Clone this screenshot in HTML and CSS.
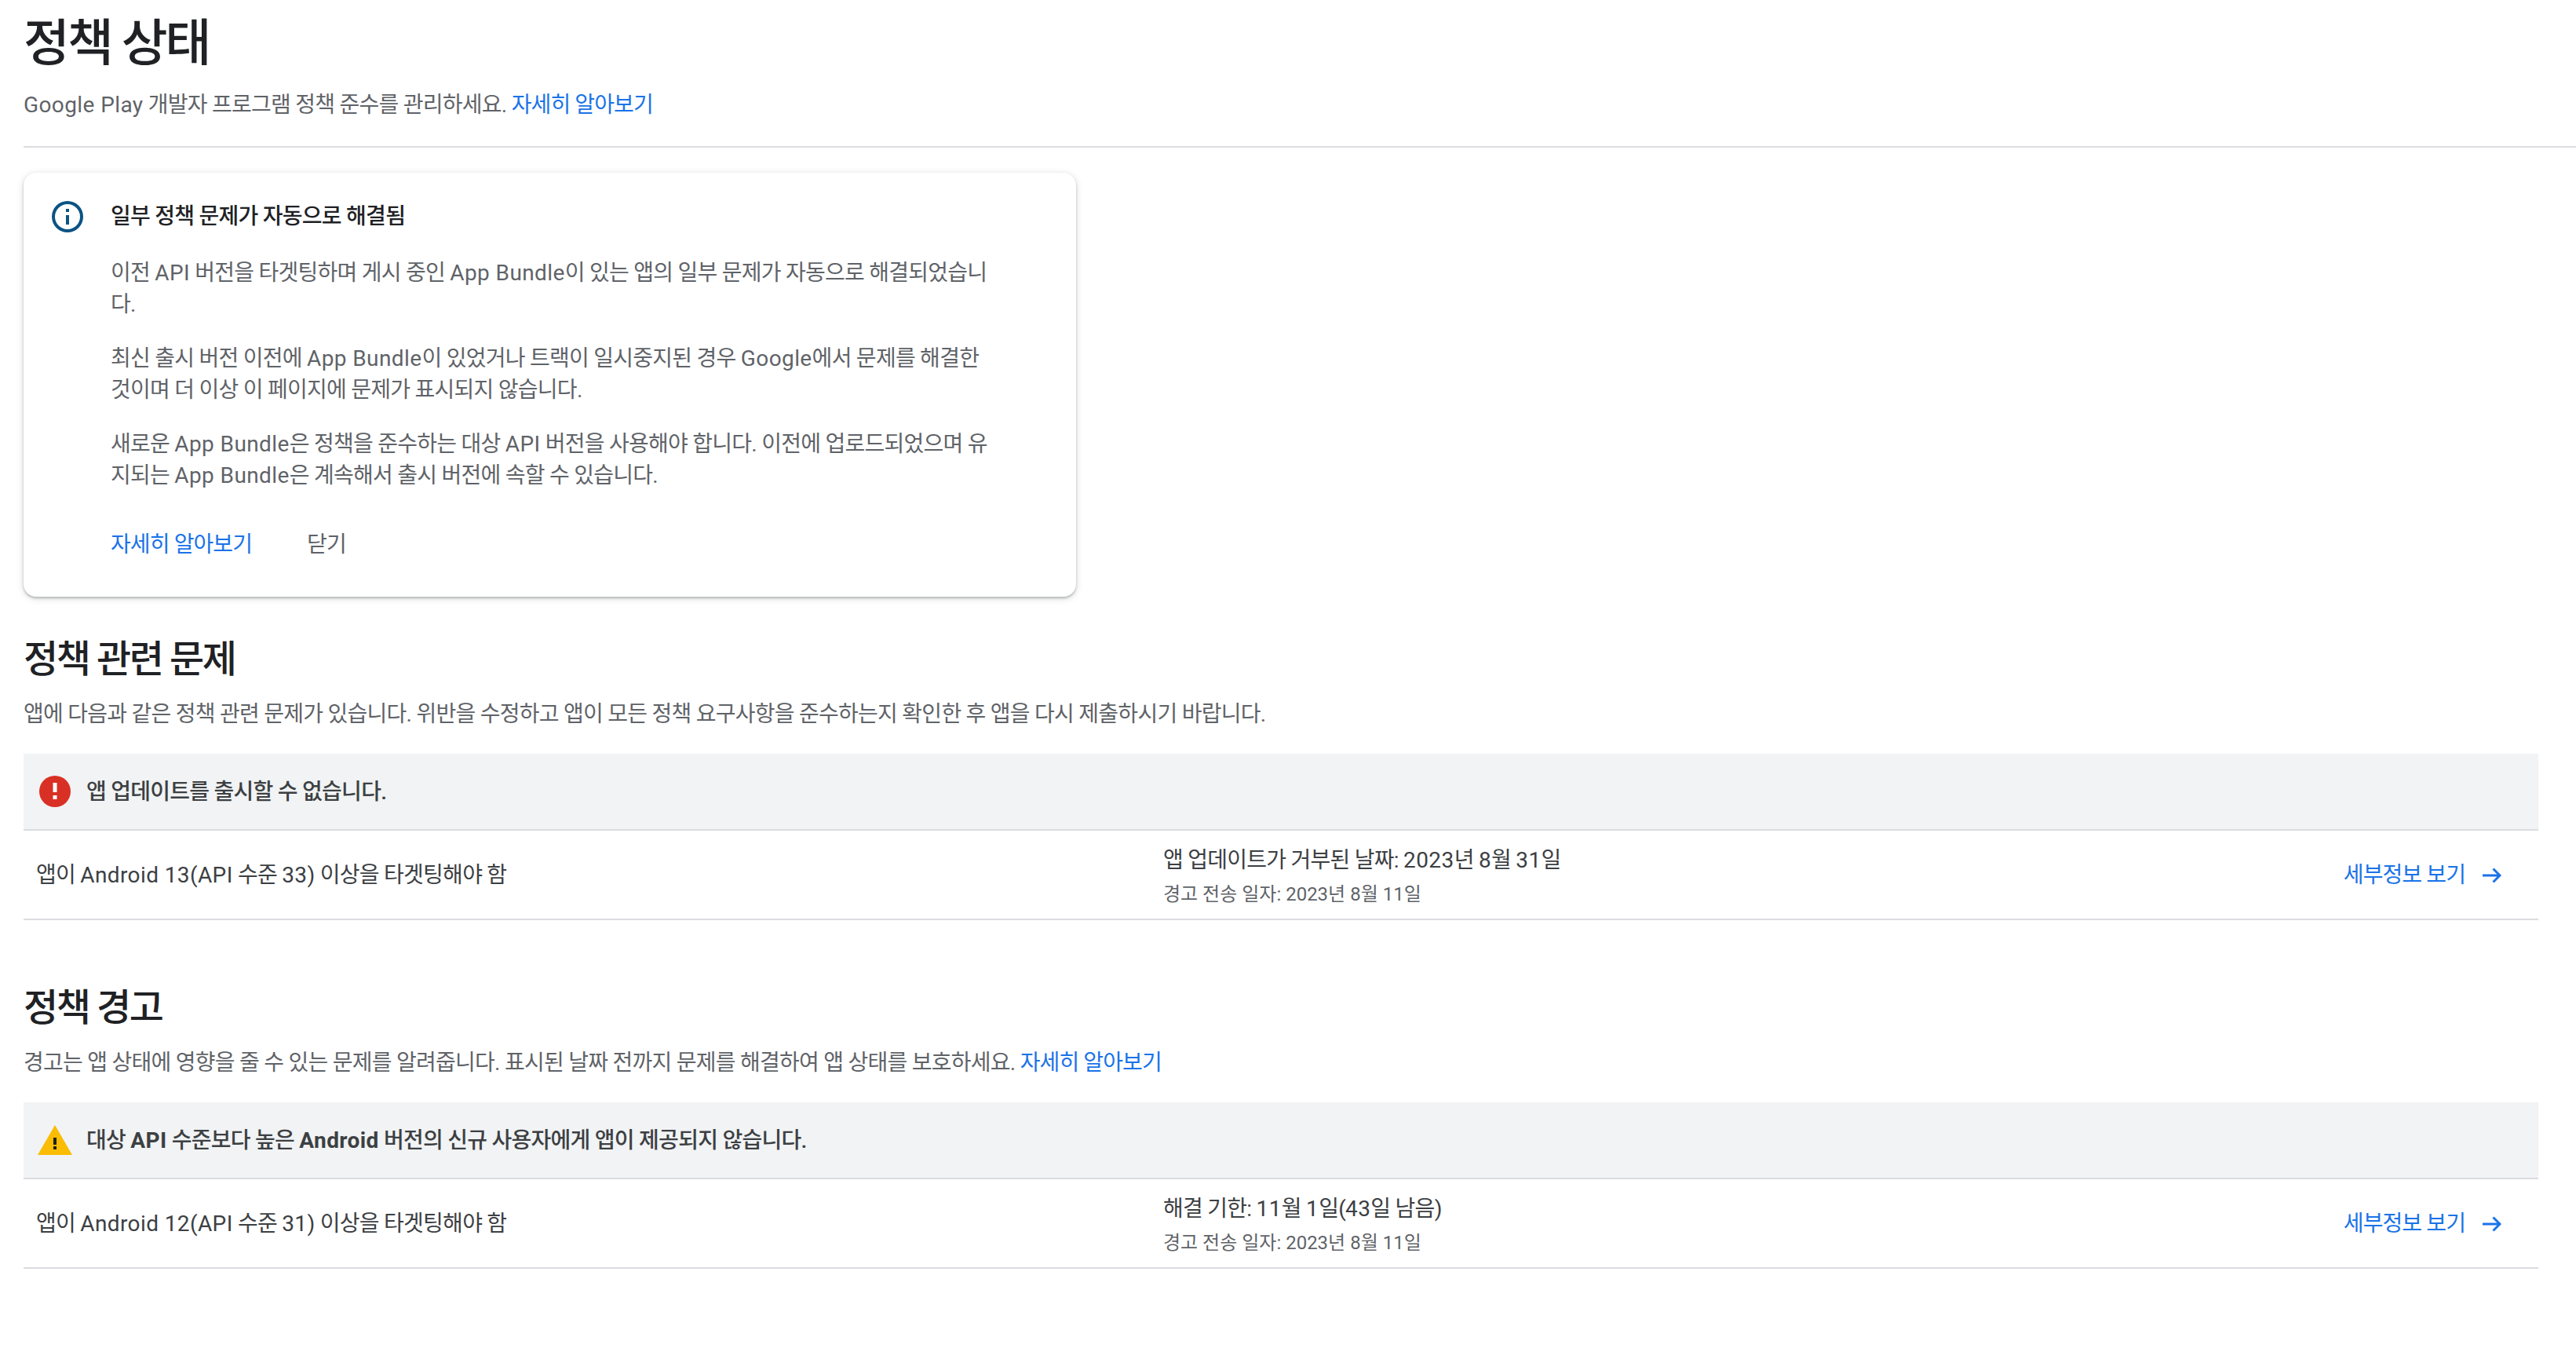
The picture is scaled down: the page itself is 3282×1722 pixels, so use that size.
FILE: index.html
```html
<!DOCTYPE html>
<html lang="ko">
<head>
<meta charset="utf-8">
<title>정책 상태</title>
<link rel="stylesheet" href="styles.css">
</head>
<body>
<main class="page">
  <header class="head">
    <h1 class="title">정책 상태</h1>
    <p class="text sub"><span class="en">Google Play</span> 개발자 프로그램 정책 준수를 관리하세요. <a class="link">자세히 알아보기</a></p>
  </header>

  <section class="card">
    <svg class="info-icon" viewBox="0 0 24 24" width="48" height="48"><path fill="#0b5384" d="M11 7h2v2h-2zm0 4h2v6h-2zm1-9a10 10 0 1 0 0 20 10 10 0 0 0 0-20zm0 18a8 8 0 1 1 0-16 8 8 0 0 1 0 16z"/></svg>
    <div class="card-body">
      <h3 class="card-title">일부 정책 문제가 자동으로 해결됨</h3>
      <p class="card-p">이전 <span class="en">API</span> 버전을 타겟팅하며 게시 중인 <span class="en">App Bundle</span>이 있는 앱의 일부 문제가 자동으로 해결되었습니다.</p>
      <p class="card-p">최신 출시 버전 이전에 <span class="en">App Bundle</span>이 있었거나 트랙이 일시중지된 경우 <span class="en">Google</span>에서 문제를 해결한 것이며 더 이상 이 페이지에 문제가 표시되지 않습니다.</p>
      <p class="card-p">새로운 <span class="en">App Bundle</span>은 정책을 준수하는 대상 <span class="en">API</span> 버전을 사용해야 합니다. 이전에 업로드되었으며 유지되는 <span class="en">App Bundle</span>은 계속해서 출시 버전에 속할 수 있습니다.</p>
      <div class="card-actions"><a class="link">자세히 알아보기</a><span class="text">닫기</span></div>
    </div>
  </section>

  <section class="issues issues-first">
    <h2 class="section-title">정책 관련 문제</h2>
    <p class="text desc">앱에 다음과 같은 정책 관련 문제가 있습니다. 위반을 수정하고 앱이 모든 정책 요구사항을 준수하는지 확인한 후 앱을 다시 제출하시기 바랍니다.</p>
    <div class="banner">
      <svg class="banner-icon" viewBox="0 0 44 40" width="44" height="40"><circle cx="22" cy="20" r="20" fill="#d93025"/><rect x="19.5" y="9" width="5" height="12" fill="#fff"/><rect x="19.5" y="25" width="5" height="5" fill="#fff"/></svg>
      <span class="banner-text">앱 업데이트를 출시할 수 없습니다.</span>
    </div>
    <div class="row">
      <div class="cell-name">앱이 <span class="en">Android 13(API</span> 수준 <span class="en">33)</span> 이상을 타겟팅해야 함</div>
      <div class="cell-date"><div class="date-main">앱 업데이트가 거부된 날짜: <span class="en">2023</span>년 <span class="en">8</span>월 <span class="en">31</span>일</div><div class="date-sub">경고 전송 일자: 2023년 8월 11일</div></div>
      <a class="details"><span>세부정보 보기</span><svg viewBox="0 0 24 24" width="24" height="24"><path fill="none" stroke="#1a73e8" stroke-width="3" d="M0 12H22M13.5 3.5L22 12L13.5 20.5"/></svg></a>
    </div>
  </section>

  <section class="issues">
    <h2 class="section-title">정책 경고</h2>
    <p class="text desc">경고는 앱 상태에 영향을 줄 수 있는 문제를 알려줍니다. 표시된 날짜 전까지 문제를 해결하여 앱 상태를 보호하세요. <a class="link">자세히 알아보기</a></p>
    <div class="banner">
      <svg class="banner-icon" viewBox="0 0 44 40" width="44" height="40"><path fill="#fbbc04" d="M22 1L44 39H0z"/><rect x="20" y="17" width="4" height="9" fill="#202124"/><rect x="20" y="28" width="4" height="4" fill="#202124"/></svg>
      <span class="banner-text">대상 <b class="en">API</b> 수준보다 높은 <b class="en">Android</b> 버전의 신규 사용자에게 앱이 제공되지 않습니다.</span>
    </div>
    <div class="row">
      <div class="cell-name">앱이 <span class="en">Android 12(API</span> 수준 <span class="en">31)</span> 이상을 타겟팅해야 함</div>
      <div class="cell-date"><div class="date-main">해결 기한: <span class="en">11</span>월 <span class="en">1</span>일(<span class="en">43</span>일 남음)</div><div class="date-sub">경고 전송 일자: 2023년 8월 11일</div></div>
      <a class="details"><span>세부정보 보기</span><svg viewBox="0 0 24 24" width="24" height="24"><path fill="none" stroke="#1a73e8" stroke-width="3" d="M0 12H22M13.5 3.5L22 12L13.5 20.5"/></svg></a>
    </div>
  </section>
</main>
</body>
</html>
```
FILE: styles.css
```css
* { box-sizing: border-box; }
html, body { margin: 0; padding: 0; background: #fff; }
body { font-family: Roboto, "Noto Sans CJK KR", sans-serif; font-size: 28px; line-height: 40px; color: #5f6368; letter-spacing: -0.74px; }
h1, h2, h3, p { margin: 0; font-weight: 400; }
.en { letter-spacing: 0.4px; }
.page { padding: 0 48px 0 30px; width: 3282px; min-height: 1722px; }
.head { margin-right: -48px; height: 188px; border-bottom: 2px solid #dadce0; }
.title { font-size: 64px; line-height: 80px; color: #202124; padding-top: 16px; height: 112px; font-weight: 500; letter-spacing: -3px; }
.text { color: #5f6368; }
.sub { padding-top: 2px; }
.link { color: #1a73e8; letter-spacing: -0.9px; }
.card { display: flex; width: 1341px; height: 540px; margin-top: 32px; padding: 36px 32px 0 32px; border-radius: 16px; background: #fff;
  box-shadow: 0 2px 3px rgba(60,64,67,.3), 0 2px 8px 1px rgba(60,64,67,.15); }
.info-icon { flex: none; margin: -4px 31px 0 0; }
.card-body { width: 1132px; }
.card-title { font-size: 28px; color: #202124; font-weight: 500; }
.card-p { margin-top: 29px; }
.card-title + .card-p { margin-top: 32px; }
.card-actions { display: flex; gap: 70px; margin-top: 48px; }
.issues { margin-top: 80px; }
.issues-first { margin-top: 48px; }
.section-title { font-size: 48px; line-height: 64px; color: #202124; font-weight: 500; letter-spacing: -2.4px; }
.desc { margin-top: 18px; }
.banner { display: flex; align-items: center; height: 98px; margin-top: 30px; padding-left: 18px; background: #f1f3f4; border-bottom: 2px solid #dadce0; color: #3c4043; font-weight: 500; }
.banner-icon { flex: none; margin-right: 18px; }
.banner-text { padding-top: 2px; }
.banner-text b { font-weight: 700; }
.row { display: grid; grid-template-columns: 1436px 1fr auto; align-items: center; height: 114px; padding: 0 47px 0 16px; border-bottom: 2px solid #dadce0; color: #3c4043; }
.cell-name { padding-top: 2px; }
.cell-date { padding-top: 3px; }
.date-sub { font-size: 24px; line-height: 32px; color: #5f6368; margin-top: 7px; letter-spacing: 0; }
.details { display: flex; align-items: center; gap: 22px; padding-top: 2px; color: #1a73e8; letter-spacing: -0.9px; }
```
